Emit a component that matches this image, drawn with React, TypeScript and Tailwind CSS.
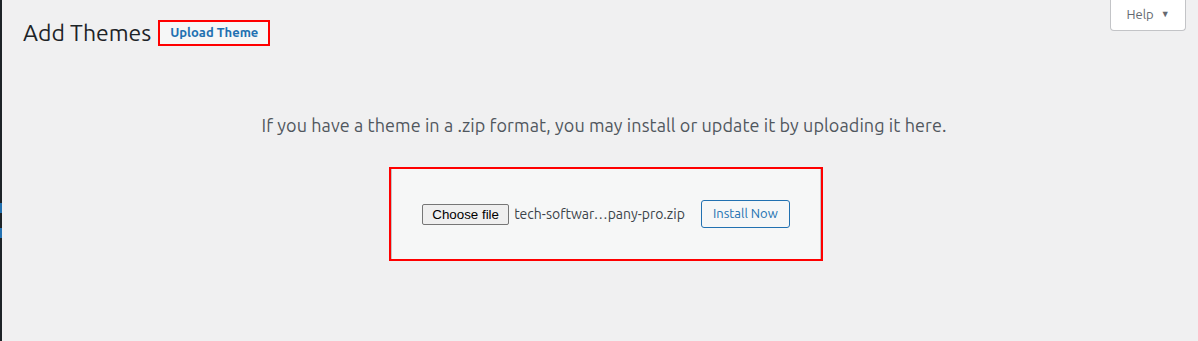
const ubuntu = "font-['Ubuntu','Noto_Sans','Open_Sans',sans-serif]";

const AdminEdge = () => (
  <div className="flex w-[2px] shrink-0 flex-col bg-[#1d2327]">
    <div className="h-[203px]" />
    <div className="h-[10px] bg-[#2271b1]" />
    <div className="h-[15px]" />
    <div className="h-[10px] bg-[#2271b1]" />
  </div>
);

const HelpTab = () => (
  <button
    type="button"
    className="mr-[12px] flex h-[31px] w-[76px] items-center justify-center gap-[7px] rounded-b-[4px] border border-t-0 border-[#c3c4c7] bg-white text-[13px] text-[#646970]"
  >
    <span>Help</span>
    <span className="text-[9px]">▼</span>
  </button>
);

const UploadBox = () => (
  <div className="w-[434px] border-2 border-[#ff0000]">
    <div className="flex h-[90px] items-center justify-center border-x border-[#c3c4c7] bg-[#f6f7f7]">
      <button
        type="button"
        className="h-[21px] w-[87px] rounded-[2px] border border-[#767676] bg-[#efefef] font-['Liberation_Sans',Arial,sans-serif] text-[13.33px] text-black"
      >
        Choose file
      </button>
      <span className="ml-[5px] text-[14px] text-[#3c434a]">tech-softwar…pany-pro.zip</span>
      <button
        type="button"
        className="ml-[16px] h-[28px] w-[89px] rounded-[3px] border border-[#2271b1] bg-[#f6f7f7] text-[13px] text-[#2271b1]"
      >
        Install Now
      </button>
    </div>
  </div>
);

export default function App() {
  return (
    <div className={`flex h-[341px] w-full bg-[#f0f0f1] ${ubuntu}`}>
      <AdminEdge />
      <main className="flex flex-1 flex-col">
        <div className="flex items-start justify-between">
          <div className="ml-[21px] mt-[18px] flex items-center gap-[7px]">
            <h1 className="text-[23px] leading-[30px] text-[#1d2327]">Add Themes</h1>
            <a className="flex h-[26px] w-[112px] items-center justify-center border-2 border-[#ff0000] bg-[#f6f7f7] text-[13px] font-semibold text-[#2271b1]">
              Upload Theme
            </a>
          </div>
          <HelpTab />
        </div>
        <p className="mt-[64px] pl-[8px] text-center text-[18px] tracking-[0.08px] text-[#50575e]">
          If you have a theme in a .zip format, you may install or update it by uploading it here.
        </p>
        <div className="mt-[28px] flex justify-center pl-[12px]">
          <UploadBox />
        </div>
      </main>
    </div>
  );
}
